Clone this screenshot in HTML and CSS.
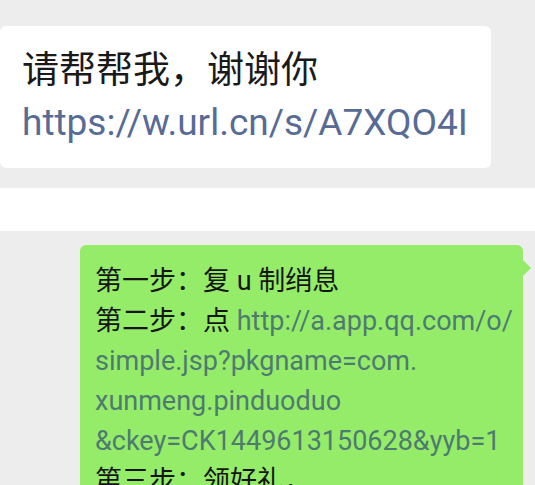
FILE: index.html
```html
<!DOCTYPE html>
<html lang="zh-CN">
<head>
<meta charset="utf-8">
<title>聊天截图</title>
<link rel="stylesheet" href="styles.css">
</head>
<body>
<section class="panel panel-top">
  <div class="bubble bubble-white">
    <div class="line">请帮帮我，谢谢你</div>
    <div class="line link">https://w.url.cn/s/A7XQO4I</div>
  </div>
</section>
<div class="gap"></div>
<section class="panel panel-bottom">
  <div class="bubble bubble-green">
    <div class="gline">第一步：复 u 制绡息</div>
    <div class="gline">第二步：点 <span class="glink">http://a.app.qq.com/o/</span></div>
    <div class="gline glink">simple.jsp?pkgname=com.</div>
    <div class="gline glink">xunmeng.pinduoduo</div>
    <div class="gline glink">&amp;ckey=CK1449613150628&amp;yyb=1</div>
    <div class="gline">第三步：领好礼，</div>
    <span class="tail"></span>
  </div>
</section>
</body>
</html>
```

FILE: styles.css
```css
html, body {
  margin: 0;
  padding: 0;
  height: 485px;
  overflow: hidden;
  background: #ffffff;
  font-family: Roboto, "Noto Sans CJK SC", sans-serif;
}

.panel {
  background: #ededed;
  display: flex;
}

.panel-top {
  height: 188px;
  padding-top: 26px;
  box-sizing: border-box;
}

.gap {
  height: 43px;
  background: #ffffff;
}

.panel-bottom {
  height: 254px;
  padding-top: 14px;
  box-sizing: border-box;
  justify-content: flex-end;
  padding-right: 12px;
}

.bubble {
  border-radius: 6px;
  position: relative;
}

.bubble-white {
  background: #ffffff;
  width: 491px;
  height: 142px;
  box-sizing: border-box;
  padding: 19px 0 0 22px;
  font-size: 37px;
  line-height: 52px;
  color: #1a1a1a;
}

.line {
  white-space: nowrap;
}

.link {
  color: #576b95;
}

.bubble-green {
  background: #95ec69;
  width: 443px;
  height: 260px;
  box-sizing: border-box;
  padding: 16px 0 0 15px;
  font-size: 27px;
  line-height: 40px;
  color: #161616;
}

.gline {
  white-space: nowrap;
}

.glink {
  color: #4e7b70;
}

.tail {
  position: absolute;
  right: -8px;
  top: 14px;
  width: 0;
  height: 0;
  border-top: 9px solid transparent;
  border-bottom: 9px solid transparent;
  border-left: 9px solid #95ec69;
}
```
